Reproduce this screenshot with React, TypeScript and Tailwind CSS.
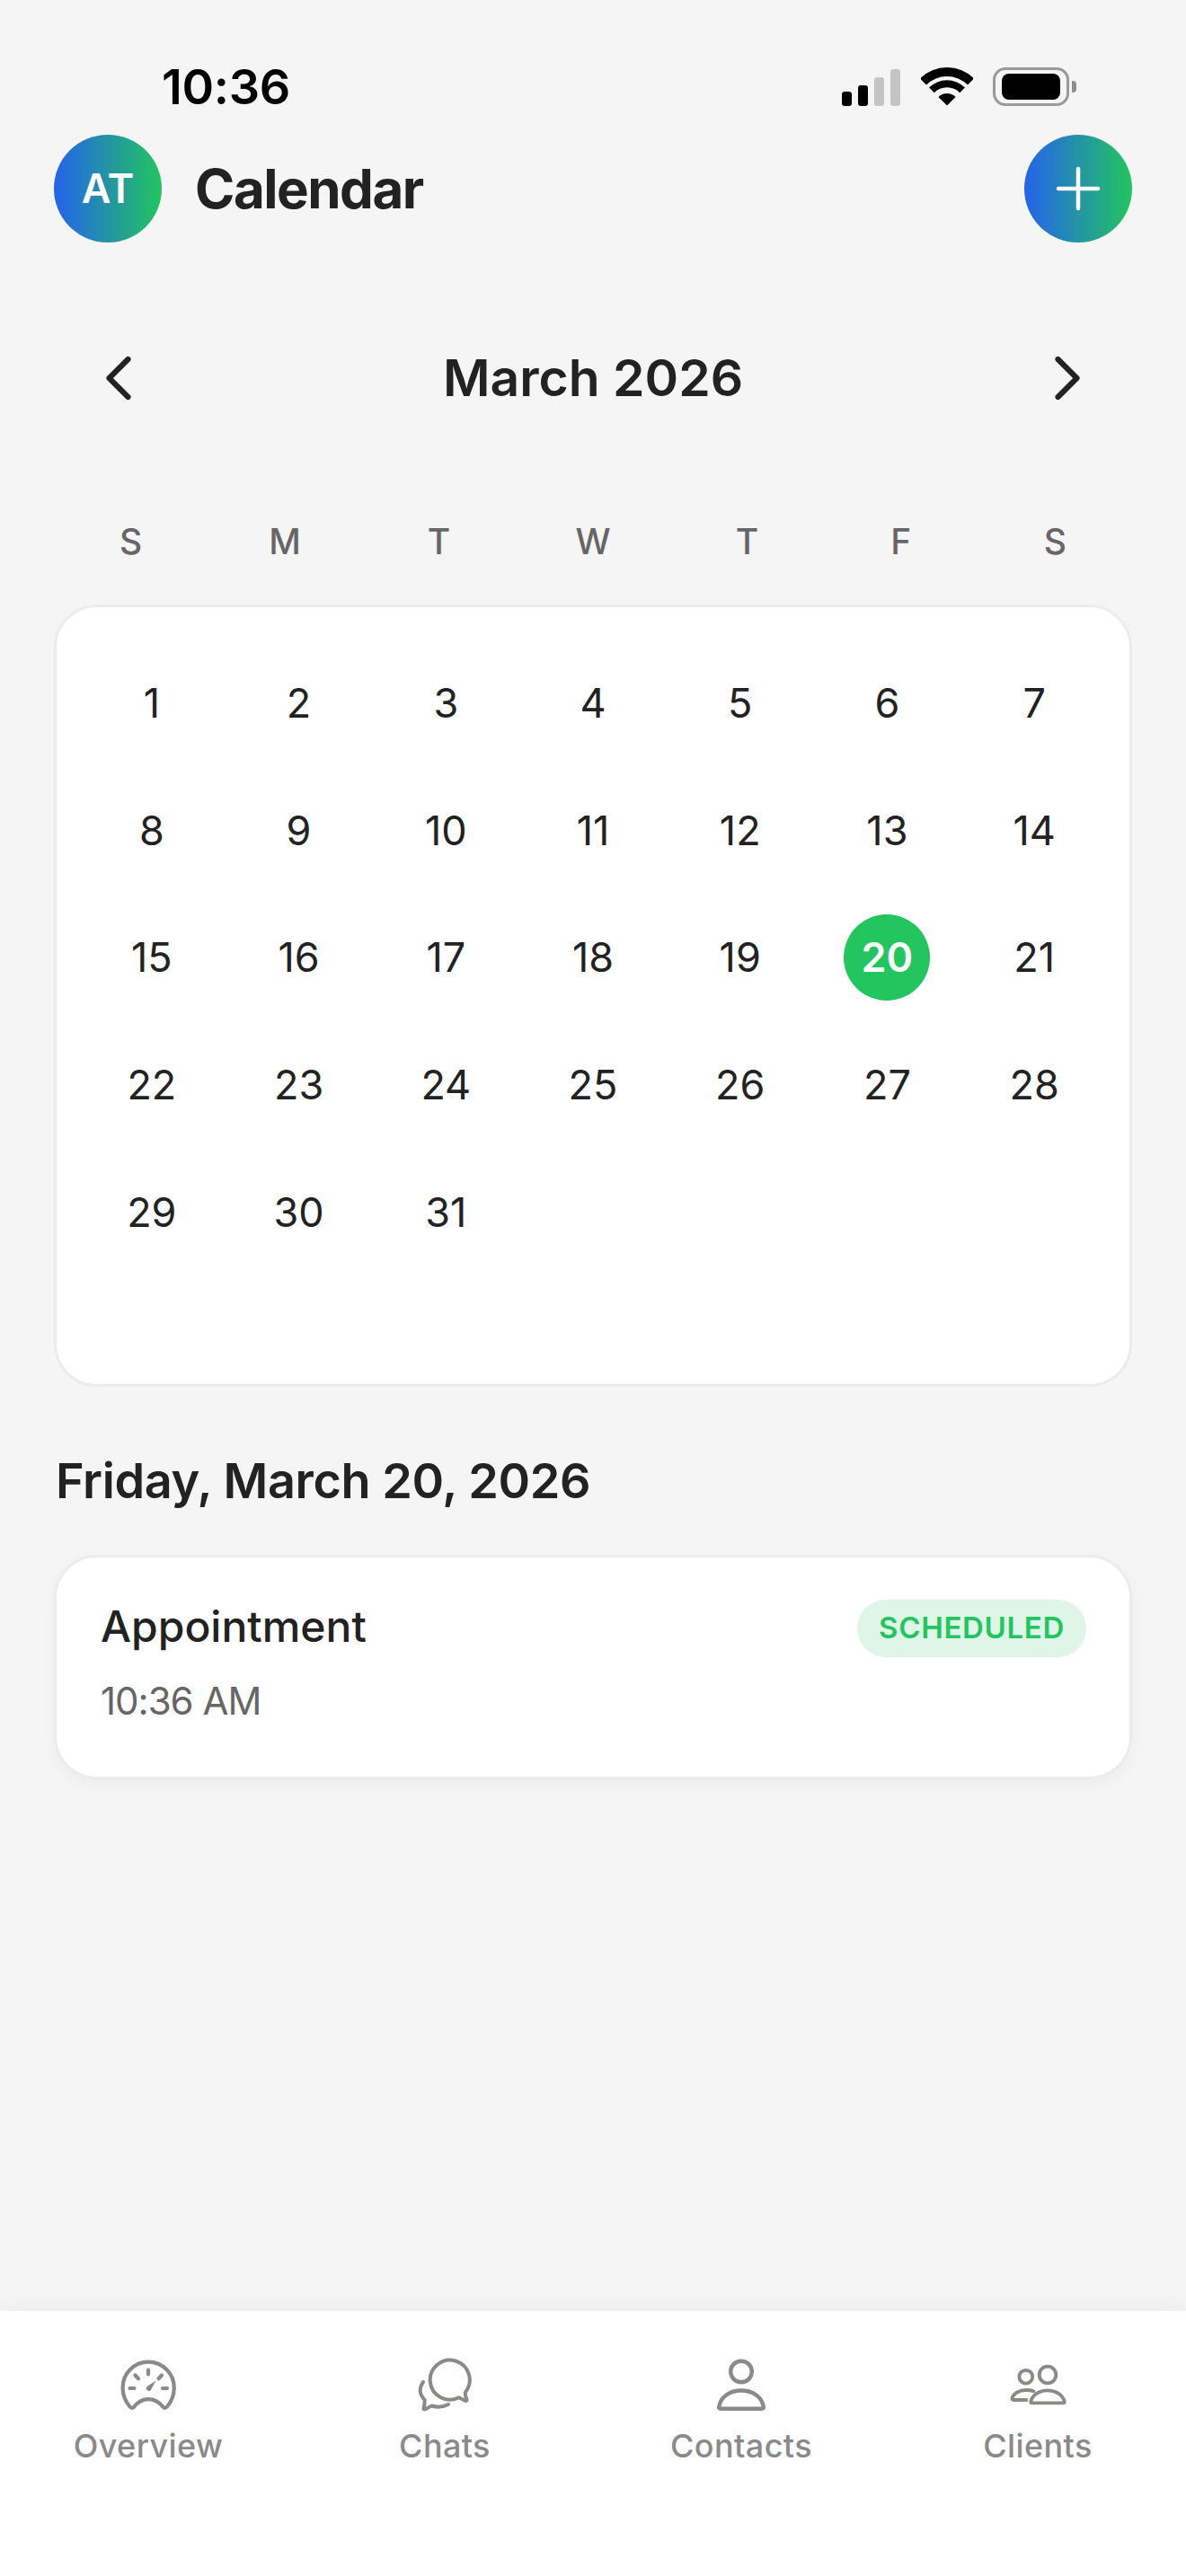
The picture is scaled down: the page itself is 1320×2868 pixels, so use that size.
import React from "react";

const days: (number | null)[] = Array.from({ length: 31 }, (_, i) => i + 1);
const weekdays = ["S", "M", "T", "W", "T", "F", "S"];

function wedge(r1: number, r2: number) {
  const cx = 29, cy = 42.5, k = Math.SQRT1_2;
  const p = (r: number, s: number) => `${(cx + s * r * k).toFixed(2)} ${(cy - r * k).toFixed(2)}`;
  if (r2 === 0) return `M${cx} ${cy} L${p(r1, -1)} A${r1} ${r1} 0 0 1 ${p(r1, 1)} Z`;
  return `M${p(r1, -1)} A${r1} ${r1} 0 0 1 ${p(r1, 1)} L${p(r2, 1)} A${r2} ${r2} 0 0 0 ${p(r2, -1)} Z`;
}

function StatusIcons() {
  return (
    <div className="flex items-end">
      <div className="flex items-end gap-[6.5px]">
        <div className="w-[11.5px] h-[16px] rounded-[3px] bg-black" />
        <div className="w-[11.5px] h-[23px] rounded-[3px] bg-black" />
        <div className="w-[11.5px] h-[32px] rounded-[3px] bg-[#c4c4c4]" />
        <div className="w-[11.5px] h-[41px] rounded-[3px] bg-[#c4c4c4]" />
      </div>
      <svg className="ml-[22.5px]" width="58" height="43" viewBox="0 0 58 43" fill="#000">
        <path d={wedge(42.5, 32.5)} />
        <path d={wedge(28.2, 20.2)} />
        <path d={wedge(13.5, 0)} />
      </svg>
      <div className="ml-[22px] flex items-center h-[43px]">
        <div className="w-[85px] h-[43px] rounded-[14px] border-[3.5px] border-[#999999] flex items-center justify-center">
          <div className="w-[65px] h-[29px] rounded-[8px] bg-black" />
        </div>
        <div className="ml-[3px] w-[5.5px] h-[13px] rounded-r-[4px] bg-[#8e8e8e]" />
      </div>
    </div>
  );
}

function Chevron({ d }: { d: string }) {
  return (
    <svg width="84" height="84" viewBox="0 0 24 24" fill="none" stroke="#222222" strokeWidth="1.75" strokeLinecap="round" strokeLinejoin="round">
      <path d={d} />
    </svg>
  );
}

function OverviewIcon() {
  return (
    <svg width="72" height="72" viewBox="0 0 72 72" fill="none" stroke="#8a8a88" strokeWidth="4.2" strokeLinecap="round" strokeLinejoin="round">
      <path d="M15.5 60.5C10.5 54.5 7.6 47.5 7.6 39.5C7.6 23.5 20.2 10.6 36 10.6C51.8 10.6 64.8 23.5 64.8 39.5C64.8 47.5 62 54.5 57 60.5C55.5 62.3 53.8 62.3 52.3 60.6C48 55.3 42.5 52.2 36.2 52.2C30 52.2 24.5 55.3 20.2 60.6C18.7 62.3 17 62.3 15.5 60.5Z" />
      <path d="M36 19.5V24.5M21.5 25.5L25 29.2M51 25.5L47.5 29.2M15.5 40H20.5M52 40H57" />
      <path d="M44.6 31.5L38.8 42.2C37.2 43.8 34.2 43.2 33.8 40.6C33.6 39.2 34.4 38.2 35.2 37.4L44.6 31.5Z" fill="#8a8a88" stroke="none" />
    </svg>
  );
}

function ChatsIcon() {
  return (
    <svg width="72" height="72" viewBox="0 0 72 72" fill="none" stroke="#8a8a88" strokeWidth="4" strokeLinecap="round" strokeLinejoin="round">
      <path d="M51.6 50.3A22 22 0 1 1 59.2 44Q58 47 60.2 51.5Q61.5 55 58 53.5Q54 51.5 51.6 50.3Z" />
      <path d="M12 33Q8.5 38 8.7 43Q9 48 13.7 53Q14 58 12.5 61.5Q12 64.5 15 63Q18 61 21.5 59.5Q31 62.5 40 58" />
    </svg>
  );
}

function ContactsIcon() {
  return (
    <svg width="72" height="72" viewBox="0 0 72 72" fill="none" stroke="#8a8a88" strokeWidth="4.4" strokeLinecap="round" strokeLinejoin="round">
      <circle cx="36" cy="21.5" r="11.8" />
      <path d="M13 62.8H59Q61.2 62.8 60.8 60.5C59 50 49 42.5 36 42.5C23 42.5 13 50 11.2 60.5Q10.8 62.8 13 62.8Z" />
    </svg>
  );
}

function ClientsIcon() {
  return (
    <svg width="72" height="72" viewBox="0 0 72 72" fill="none" stroke="#8a8a88" strokeWidth="3.8" strokeLinecap="round" strokeLinejoin="round">
      <circle cx="47" cy="25" r="9.3" />
      <circle cx="22.8" cy="27.2" r="7.4" />
      <path d="M29 56.4H65Q66.2 56.4 65.6 54.2C63.5 47 56 42.3 47 42.3C38 42.3 30.4 47 28.4 54.2Q27.8 56.4 29 56.4Z" />
      <path d="M31.5 43.2C29.5 42.5 26.5 42 23 42C15 42 9 46 7.5 50.5Q7 53 9 53H23.5" />
    </svg>
  );
}

const tabs = [
  { label: "Overview", Icon: OverviewIcon },
  { label: "Chats", Icon: ChatsIcon },
  { label: "Contacts", Icon: ContactsIcon },
  { label: "Clients", Icon: ClientsIcon },
];

export default function App() {
  return (
    <div className="relative w-[1320px] h-[2868px] overflow-hidden flex flex-col bg-[#f5f5f5] font-['Inter',sans-serif] text-[#222222]">
      {/* status bar */}
      <div className="h-[150px] pl-[180px] pr-[122px] pt-[70px] flex items-start justify-between">
        <span className="text-[54px] leading-[54px] font-semibold text-black tracking-[-0.3px]">10:36</span>
        <div className="mt-[5px]">
          <StatusIcons />
        </div>
      </div>

      {/* header */}
      <div className="h-[120px] px-[60px] flex items-center justify-between">
        <div className="flex items-center gap-[37px]">
          <div className="w-[120px] h-[120px] rounded-full bg-[linear-gradient(90deg,#2563eb,#22c55e)] flex items-center justify-center text-white text-[45px] font-semibold">
            AT
          </div>
          <span className="text-[60px] leading-[72px] font-bold tracking-[-1.5px]">Calendar</span>
        </div>
        <div className="w-[120px] h-[120px] rounded-full bg-[linear-gradient(90deg,#2563eb,#22c55e)] flex items-center justify-center">
          <svg width="72" height="72" viewBox="0 0 72 72" fill="none" stroke="#ffffff" strokeWidth="4.5" strokeLinecap="round">
            <path d="M36 14V58M14 36H58" />
          </svg>
        </div>
      </div>

      {/* month nav */}
      <div className="mt-[109px] h-[84px] px-[90px] flex items-center justify-between">
        <Chevron d="M15 18l-6-6 6-6" />
        <span className="text-[57px] font-semibold">March 2026</span>
        <Chevron d="M9 18l6-6-6-6" />
      </div>

      {/* weekdays */}
      <div className="mt-[110px] px-[60px] grid grid-cols-7 h-[60px] items-center">
        {weekdays.map((d, i) => (
          <span key={i} className="text-center text-[39px] font-medium text-[#666666]">
            {d}
          </span>
        ))}
      </div>

      {/* calendar card */}
      <div className="mx-[60px] mt-[40px] h-[871px] rounded-[48px] bg-white border-[3px] border-[#ececec] px-[24px] pt-[36px]">
        <div className="grid grid-cols-7 auto-rows-[141.7px]">
          {days.map((d) => (
            <div key={d} className="flex items-center justify-center">
              {d === 20 ? (
                <div className="w-[96px] h-[96px] rounded-full bg-[#22c55e] text-white text-[45px] font-semibold flex items-center justify-center">
                  {d}
                </div>
              ) : (
                <span className="text-[45px]">{d}</span>
              )}
            </div>
          ))}
        </div>
      </div>

      {/* selected day */}
      <div className="mt-[72px] pl-[62px] text-[54px] leading-[66px] font-semibold tracking-[-0.4px]">Friday, March 20, 2026</div>

      <div className="mx-[60px] mt-[49px] h-[250px] rounded-[48px] bg-white border-[3px] border-[#ececec] shadow-[0_6px_18px_rgba(0,0,0,0.04)] pl-[49px] pr-[48px] pt-[47px]">
        <div className="flex items-start justify-between">
          <span className="text-[48px] leading-[60px] font-medium">Appointment</span>
          <span className="h-[64px] px-[24px] rounded-full bg-[#dff5e8] text-[#22c55e] text-[33px] font-semibold tracking-[0.66px] flex items-center">
            SCHEDULED
          </span>
        </div>
        <div className="mt-[23px] text-[42px] leading-[52px] text-[#666666] tracking-[-1px]">10:36 AM</div>
      </div>

      {/* tab bar */}
      <div className="mt-auto h-[295px] bg-white shadow-[0_-6px_24px_rgba(0,0,0,0.04)] grid grid-cols-4 pt-[46px]">
        {tabs.map(({ label, Icon }) => (
          <div key={label} className="flex flex-col items-center">
            <Icon />
            <span className="mt-[8px] text-[36px] leading-[48px] font-medium text-[#8a8a88] tracking-[0.4px]">{label}</span>
          </div>
        ))}
      </div>
    </div>
  );
}
